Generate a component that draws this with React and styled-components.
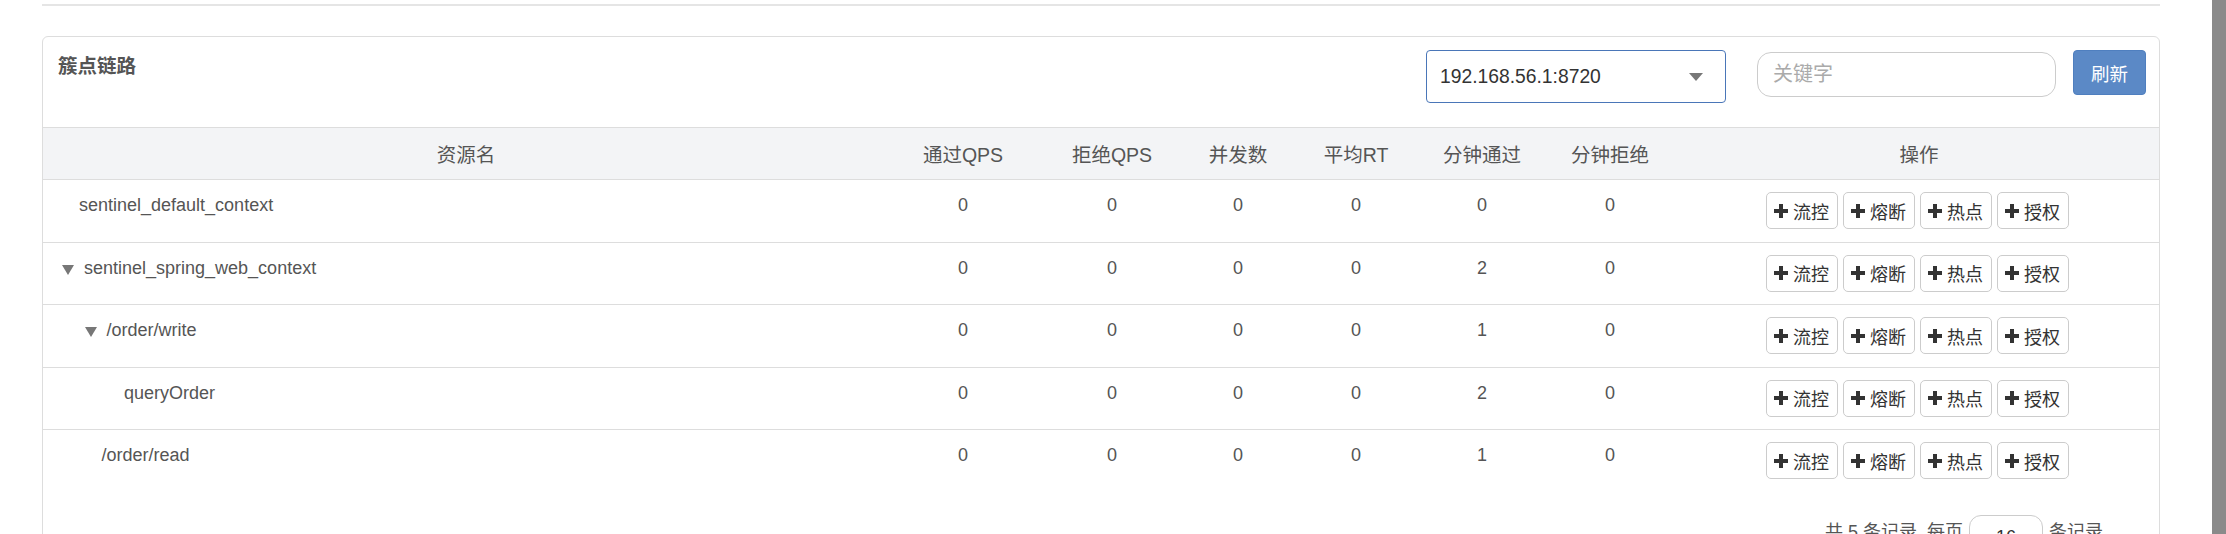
import React from 'react';
import styled, { createGlobalStyle } from 'styled-components';

const GlobalStyle = createGlobalStyle`
  html, body {
    margin: 0;
    padding: 0;
    background: #fff;
    overflow: hidden;
  }
  body {
    font-family: "Liberation Sans", Arial, "Noto Sans CJK SC", sans-serif;
    color: #555;
  }
  * {
    box-sizing: border-box;
  }
`;

const Page = styled.div`
  display: flex;
  height: 534px;
  overflow: hidden;
`;

const Main = styled.div`
  flex: 1;
  padding: 4px 52px 0 42px;
`;

const Scrollbar = styled.div`
  width: 14px;
  background: #8a8a8a;
`;

const TopRule = styled.div`
  height: 2px;
  background: #e5e5e5;
`;

const Panel = styled.div`
  margin-top: 30px;
  border: 1px solid #ddd;
  border-radius: 6px;
  background: #fff;
  height: 600px;
`;

const PanelHeader = styled.div`
  display: flex;
  align-items: flex-start;
  height: 90px;
  padding: 13px 13px 0 15px;
`;

const Title = styled.div`
  flex: 1;
  padding-top: 3px;
  font-size: 19.5px;
  line-height: 27px;
  font-weight: bold;
  color: #555;
`;

const Select = styled.div`
  display: flex;
  align-items: center;
  justify-content: space-between;
  width: 300px;
  height: 53px;
  margin-right: 31px;
  padding: 0 22px 0 13px;
  border: 1px solid #4a76b8;
  border-radius: 4px;
  font-size: 19.3px;
  color: #333;
`;

const Caret = styled.span`
  width: 0;
  height: 0;
  border-left: 7px solid transparent;
  border-right: 7px solid transparent;
  border-top: 8px solid #777;
`;

const SearchInput = styled.input`
  width: 299px;
  height: 45px;
  margin-top: 2px;
  margin-right: 17px;
  padding: 0 15px;
  border: 1px solid #ccc;
  border-radius: 14px;
  font-family: inherit;
  font-size: 20px;
  color: #333;
  outline: none;

  &::placeholder {
    color: #aaa;
  }
`;

const PrimaryButton = styled.button`
  width: 73px;
  height: 45px;
  border: 1px solid #4f7fbf;
  border-radius: 4px;
  background: #5b89c6;
  color: #fff;
  font-family: inherit;
  font-size: 18.5px;
  padding: 0;
`;

const COLS = '846px 148px 150px 102px 134px 118px 138px 1fr';

const HeadRow = styled.div`
  display: grid;
  grid-template-columns: ${COLS};
  align-items: center;
  height: 52px;
  border-top: 1px solid #ddd;
  background: #f3f4f6;
  font-size: 19.5px;
  color: #555;
  text-align: center;
`;

const Row = styled.div`
  display: grid;
  grid-template-columns: ${COLS};
  height: 62.5px;
  border-top: 1px solid #ddd;
  font-size: 18px;
  line-height: 26px;
  color: #555;
`;

const Cell = styled.div`
  padding-top: 12px;
  text-align: center;
`;

const NameCell = styled.div`
  display: flex;
  align-items: flex-start;
  padding-top: 12px;
  padding-left: ${({ level }) => 19 + level * 22.5}px;
`;

const Toggle = styled.span`
  width: 0;
  height: 0;
  margin-top: 10px;
  margin-right: 10px;
  border-left: 6px solid transparent;
  border-right: 6px solid transparent;
  border-top: 10px solid #777;
`;

const LeafGap = styled.span`
  width: 17px;
  flex-shrink: 0;
`;

const OpsCell = styled.div`
  display: flex;
  justify-content: center;
  gap: 5px;
  padding-top: 12px;
  padding-right: 4px;
`;

const OpButton = styled.button`
  display: flex;
  align-items: center;
  justify-content: center;
  gap: 5px;
  width: 72px;
  height: 37px;
  padding: 0;
  border: 1px solid #ccc;
  border-radius: 5px;
  background: #fff;
  color: #333;
  font-family: inherit;
  font-size: 18px;
`;

const Pager = styled.div`
  display: flex;
  justify-content: flex-end;
  align-items: flex-start;
  gap: 6px;
  margin-top: 23px;
  padding-right: 56px;
  font-size: 18px;
  line-height: 26px;
  color: #555;
`;

const PagerText = styled.span`
  padding-top: 4px;
`;

const PageSize = styled.div`
  display: flex;
  justify-content: center;
  width: 74px;
  height: 45px;
  padding-top: 8px;
  border: 1px solid #ccc;
  border-radius: 12px;
  color: #333;
`;

const PlusIcon = () => (
  <svg width='14' height='14' viewBox='0 0 14 14'>
    <path d='M5 0h4v5h5v4H9v5H5V9H0V5h5z' fill='#333' />
  </svg>
);

const headers = ['资源名', '通过QPS', '拒绝QPS', '并发数', '平均RT', '分钟通过', '分钟拒绝', '操作'];

const rows = [
  { name: 'sentinel_default_context', level: 0, open: false, stats: [0, 0, 0, 0, 0, 0] },
  { name: 'sentinel_spring_web_context', level: 0, open: true, stats: [0, 0, 0, 0, 2, 0] },
  { name: '/order/write', level: 1, open: true, stats: [0, 0, 0, 0, 1, 0] },
  { name: 'queryOrder', level: 2, open: false, stats: [0, 0, 0, 0, 2, 0] },
  { name: '/order/read', level: 1, open: false, stats: [0, 0, 0, 0, 1, 0] },
];

const ops = ['流控', '熔断', '热点', '授权'];

const App = () => {
  return (
    <Page>
      <GlobalStyle />
      <Main>
        <TopRule />
        <Panel>
          <PanelHeader>
            <Title>簇点链路</Title>
            <Select>
              <span>192.168.56.1:8720</span>
              <Caret />
            </Select>
            <SearchInput placeholder='关键字' />
            <PrimaryButton>刷新</PrimaryButton>
          </PanelHeader>
          <HeadRow>
            {headers.map((h) => (
              <div key={h}>{h}</div>
            ))}
          </HeadRow>
          {rows.map((r) => (
            <Row key={r.name}>
              <NameCell level={r.level}>
                {r.open ? <Toggle /> : <LeafGap />}
                <span>{r.name}</span>
              </NameCell>
              {r.stats.map((v, i) => (
                <Cell key={i}>{v}</Cell>
              ))}
              <OpsCell>
                {ops.map((op) => (
                  <OpButton key={op}>
                    <PlusIcon />
                    {op}
                  </OpButton>
                ))}
              </OpsCell>
            </Row>
          ))}
          <Pager>
            <PagerText>共 5 条记录, 每页</PagerText>
            <PageSize>16</PageSize>
            <PagerText>条记录</PagerText>
          </Pager>
        </Panel>
      </Main>
      <Scrollbar />
    </Page>
  );
};

export default App;
